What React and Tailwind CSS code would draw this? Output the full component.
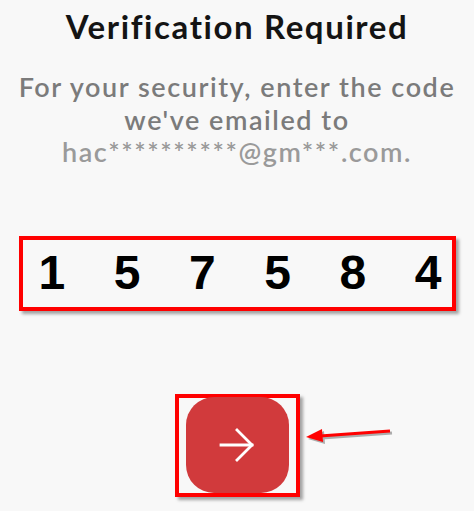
import React from "react";

const digits = ["1", "5", "7", "5", "8", "4"];

const App = () => {
  return (
    <div className="relative w-[474px] h-[511px] bg-[#f8f8f8] overflow-hidden flex flex-col items-center font-['Lato',sans-serif]">
      {/* Heading */}
      <h1 className="mt-[4px] text-[33px] leading-[44px] font-bold text-[#141414] tracking-[1.6px]">
        Verification Required
      </h1>

      {/* Description */}
      <p className="mt-[23px] text-center text-[27px] leading-[32.5px] font-semibold text-[#7b7b7b] tracking-[1.55px] whitespace-nowrap">
        For your security, enter the code
        <br />
        we've emailed to
        <br />
        <span className="text-[#9a9a9a]">hac**********@gm***.com.</span>
      </p>

      {/* Code */}
      <div className="mt-[67px] w-[437px] h-[75px] border-4 border-[#ff0000] shadow-[3px_3px_3px_rgba(0,0,0,0.35)] flex items-center justify-between pl-[16px] pr-[10px] font-['Liberation_Sans',sans-serif]">
        {digits.map((d, i) => (
          <span key={i} className="text-[48px] leading-none font-bold text-black">
            {d}
          </span>
        ))}
      </div>

      {/* Submit */}
      <div className="mt-[83px] w-[125px] h-[103px] border-4 border-[#ff0000] shadow-[3px_3px_3px_rgba(0,0,0,0.35)] flex items-end pl-[7px]">
        <button className="w-[103px] h-[96px] rounded-[28px] bg-[#d13a3c] flex items-center justify-center">
          <svg width="36" height="34" viewBox="0 0 36 34" fill="none" stroke="white" strokeWidth="2.8" strokeLinecap="square">
            <path d="M2 17h31" />
            <path d="M18 2l15 15-15 15" />
          </svg>
        </button>
      </div>

      {/* Annotation arrow */}
      <svg className="absolute left-[300px] top-[420px]" width="100" height="30" viewBox="0 0 100 30">
        <g transform="translate(2,2)" opacity="0.3">
          <path d="M90 11 L20 16" stroke="black" strokeWidth="3" />
          <path d="M6 17 L22 9 L23 22 Z" fill="black" />
        </g>
        <path d="M90 11 L20 16" stroke="#ff0000" strokeWidth="3" />
        <path d="M6 17 L22 9 L23 22 Z" fill="#ff0000" />
      </svg>
    </div>
  );
};

export default App;
